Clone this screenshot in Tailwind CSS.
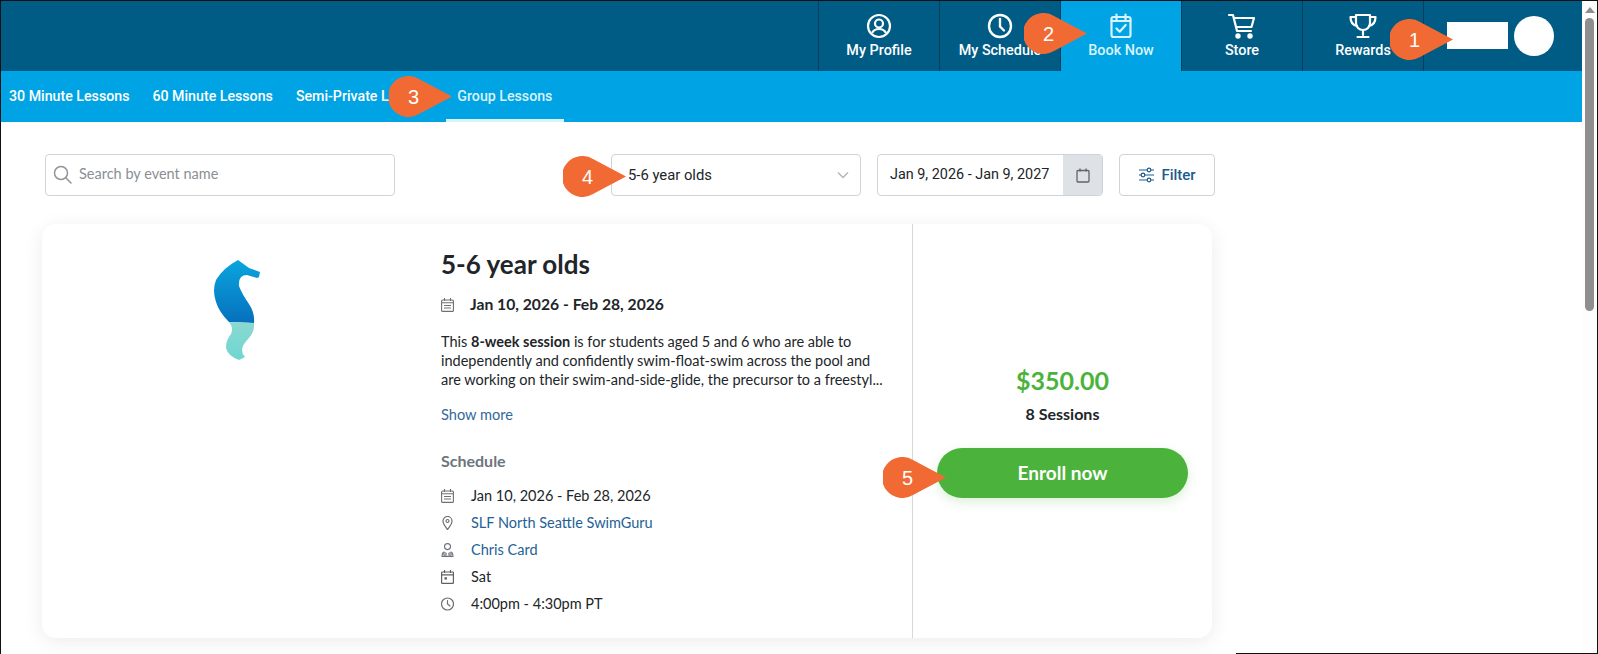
<!DOCTYPE html>
<html lang="en">
  <head>
    <meta charset="UTF-8" />
    <meta name="viewport" content="width=device-width, initial-scale=1.0" />
    <title>Book Now - Group Lessons</title>
    <script src="https://cdn.jsdelivr.net/npm/@tailwindcss/browser@4"></script>
  </head>
  <body class="relative h-[654px] w-[1598px] overflow-hidden bg-white font-['Lato',sans-serif] text-[#212529]">
    <div class="flex h-[654px] border-t border-l border-r border-t-[#111] border-l-[#111] border-r-[#111]">
      <main class="w-[1581px] shrink-0">
        <!-- top nav -->
        <nav class="flex h-[70px] justify-end bg-[#005b85] pr-[1px] font-['Roboto',sans-serif] text-[14.4px] leading-[21px] font-medium text-white">
          <a class="flex w-[121px] flex-col items-center border-l border-[#0a3d57] pt-[12px]">
            <svg class="h-[26px] w-[26px]" viewBox="0 0 26 26" fill="none" stroke="currentColor" stroke-width="2.2"><circle cx="13" cy="13" r="11"/><circle cx="13" cy="10.5" r="4"/><path d="M6 20c1.500-3 4-4 7-4s5.500 1 7 4"/></svg>
            <span class="mt-[1px]">My Profile</span>
          </a>
          <a class="flex w-[121px] flex-col items-center border-l border-[#0a3d57] pt-[12px]">
            <svg class="h-[26px] w-[26px]" viewBox="0 0 26 26" fill="none" stroke="currentColor" stroke-width="2.4" stroke-linecap="round"><circle cx="13" cy="13" r="11"/><path d="M13 6v7.500l4 4"/></svg>
            <span class="mt-[1px]">My Schedule</span>
          </a>
          <a class="flex w-[121px] flex-col items-center border-l border-[#0a3d57] bg-[#00a4e4] pt-[12px] text-[#d9f3fb]">
            <svg class="h-[26px] w-[26px]" viewBox="0 0 26 26" fill="none" stroke="currentColor" stroke-width="2.2" stroke-linecap="round" stroke-linejoin="round"><rect x="3.500" y="4" width="19" height="20" rx="2"/><path d="M8.500 1.500v5M17.500 1.500v5M3.500 8h19"/><path d="M8.500 15.500l3.200 3.200 6-6.700"/></svg>
            <span class="mt-[1px]">Book Now</span>
          </a>
          <a class="flex w-[121px] flex-col items-center border-l border-[#0a3d57] pt-[12px]">
            <svg class="h-[26px] w-[30px]" viewBox="0 0 30 26" fill="none" stroke="currentColor" stroke-width="2.2" stroke-linecap="round" stroke-linejoin="round"><path d="M2 2h4l4 16h14"/><path d="M7 5h20l-2.500 9H9.500"/><circle cx="11" cy="23" r="1.600" fill="currentColor"/><circle cx="23" cy="23" r="1.600" fill="currentColor"/></svg>
            <span class="mt-[1px]">Store</span>
          </a>
          <a class="flex w-[121px] flex-col items-center border-l border-[#0a3d57] pt-[12px]">
            <svg class="h-[26px] w-[30px]" viewBox="0 0 30 26" fill="none" stroke="currentColor" stroke-width="2.200" stroke-linecap="round" stroke-linejoin="round"><path d="M8 2h14v8c0 4-3 7-7 7s-7-3-7-7z"/><path d="M8 4H2.500c0 5 2 8 6.500 9M22 4h5.500c0 5-2 8-6.500 9M15 17v5M9.500 24h11"/></svg>
            <span class="mt-[1px]">Rewards</span>
          </a>
          <div class="flex w-[158px] items-center border-l border-[#0a3d57] pb-[1px] pl-[23px]">
            <div class="h-[27px] w-[61px] bg-white"></div>
            <div class="ml-[6px] h-[40px] w-[40px] rounded-full bg-white"></div>
          </div>
        </nav>

        <!-- lesson tabs -->
        <div class="flex h-[51px] gap-[23px] bg-[#00a4e4] pl-[8px] font-['Roboto',sans-serif] text-[14.2px] font-medium whitespace-nowrap text-white">
          <a class="flex items-center">30 Minute Lessons</a>
          <a class="flex items-center">60 Minute Lessons</a>
          <a class="flex w-[127px] items-center">Semi-Private Lessons</a>
          <a class="flex w-[118px] items-center justify-center border-b-[3px] border-[#d9f3f5] pt-[3px] text-[#d9f3fb]">Group Lessons</a>
        </div>

        <!-- filters -->
        <div class="flex items-start pt-[32px] pl-[44px]">
          <div class="flex h-[42px] w-[350px] items-center rounded border border-[#ced4da] pb-[2px] pl-[7px] text-[14.5px] text-[#8a8f94]">
            <svg class="mr-[7px] h-[19px] w-[19px]" viewBox="0 0 19 19" fill="none" stroke="#8f9599" stroke-width="1.500" stroke-linecap="round"><circle cx="8" cy="8" r="6.500"/><path d="M13 13l5 5"/></svg>
            Search by event name
          </div>
          <div class="ml-[216px] flex h-[42px] w-[250px] items-center justify-between rounded border border-[#ced4da] pr-[11px] pl-[16px] font-['Roboto',sans-serif] text-[14.8px]">
            5-6 year olds
            <svg class="h-[10px] w-[12px]" viewBox="0 0 12 10" fill="none" stroke="#b4b8bb" stroke-width="1.500"><path d="M1 2.500l5 5 5-5"/></svg>
          </div>
          <div class="ml-[16px] flex h-[42px] w-[226px] items-center overflow-hidden rounded border border-[#ced4da] font-['Roboto',sans-serif] text-[14.4px]">
            <span class="flex-1 pl-[12px]">Jan 9, 2026 - Jan 9, 2027</span>
            <span class="flex h-full w-[39px] items-center justify-center bg-[#dee2e6]">
              <svg class="h-[15px] w-[14px]" viewBox="0 0 14 15" fill="none" stroke="#5f6468" stroke-width="1.300"><rect x="1" y="2.500" width="12" height="11.500" rx="1"/><path d="M4 .5v3M10 .5v3"/></svg>
            </span>
          </div>
          <div class="ml-[16px] flex h-[42px] w-[96px] items-center justify-center gap-[6px] rounded border border-[#ced4da] font-['Roboto',sans-serif] text-[15px] font-medium text-[#1c5a8c]">
            <svg class="h-[16px] w-[17px]" viewBox="0 0 17 16" fill="none" stroke="#1c5a8c" stroke-width="1.200"><path d="M1 3h8M13 3h3M1 8h2M7 8h9M1 13h8M13 13h3"/><circle cx="11" cy="3" r="1.800"/><circle cx="5" cy="8" r="1.800"/><circle cx="11" cy="13" r="1.800"/></svg>
            Filter
          </div>
        </div>

        <!-- event card -->
        <section class="mt-[28px] ml-[41px] flex h-[414px] w-[1170px] rounded-[14px] bg-white shadow-[0_4px_20px_rgba(0,0,0,0.08)]">
          <div class="flex w-[399px] shrink-0 justify-center pt-[34px] pr-[7px]">
            <svg class="h-[104px] w-[50px]" viewBox="0 0 50 104">
              <defs>
                <linearGradient id="seaTop" x1="0" y1="0" x2="0" y2="1"><stop offset="0" stop-color="#0aa5de"/><stop offset="1" stop-color="#0670bd"/></linearGradient>
                <linearGradient id="seaTail" x1="0" y1="0" x2="0" y2="1"><stop offset="0" stop-color="#8ad9d2"/><stop offset="1" stop-color="#6fd6d0"/></linearGradient>
              </defs>
              <path d="M25 2L36 10L47 14L46 19L44 20L34 17Q25 17 26 28Q29 36 36 46Q42 55 41 65L16 64Q6 54 3 44Q-1 32 3 22Q10 10 25 2Z" fill="url(#seaTop)"/>
              <path d="M16 64L41 65Q42 73 36 80Q29 87 29 92Q29 96 32 99L26 102Q15 98 13 90Q13 82 18 76Q21 70 16 64Z" fill="url(#seaTail)"/>
            </svg>
          </div>
          <div class="w-[471px] shrink-0 pt-[22px]">
            <h2 class="text-[26px] leading-[36px] font-bold text-[#212529]">5-6 year olds</h2>
            <div class="mt-[11px] flex h-[24px] items-center text-[15.7px] font-bold">
              <svg class="mr-[16px] h-[14px] w-[13px]" viewBox="0 0 13 14" fill="none" stroke="#6c7176" stroke-width="1.100"><rect x=".6" y="2" width="11.800" height="11.400" rx="1"/><path d="M3.500 0v3M9.500 0v3M.6 4.800h11.800M3 7.500h7M3 10h7" /></svg>
              Jan 10, 2026 - Feb 28, 2026
            </div>
            <p class="mt-[15px] h-[57px] w-[446px] overflow-hidden text-[14.5px] leading-[19px]">
              This <b>8-week session</b> is for students aged 5 and 6 who are able to independently and confidently swim-float-swim across the pool and are working on their swim-and-side-glide, the precursor to a freestyl...
            </p>
            <a class="mt-[15px] block text-[14.6px] leading-[21px] text-[#33699b]">Show more</a>
            <h3 class="mt-[25px] text-[16px] leading-[21px] font-bold text-[#6c757d]">Schedule</h3>
            <ul class="mt-[14px] flex flex-col gap-[6px] text-[14.5px] leading-[21px]">
              <li class="flex items-center">
                <svg class="mr-[17px] h-[14px] w-[13px]" viewBox="0 0 13 14" fill="none" stroke="#6c7176" stroke-width="1.100"><rect x=".6" y="2" width="11.800" height="11.400" rx="1"/><path d="M3.500 0v3M9.500 0v3M.6 4.800h11.800M3 7.500h7M3 10h7" /></svg>
                Jan 10, 2026 - Feb 28, 2026
              </li>
              <li class="flex items-center text-[#245f97]">
                <svg class="mr-[17px] h-[14px] w-[13px]" viewBox="0 0 13 14" fill="none" stroke="#6c7176" stroke-width="1.200"><path d="M6.500 13.500C3.500 9.800 2 7.500 2 5a4.500 4.500 0 0 1 9 0c0 2.500-1.500 4.800-4.500 8.500z"/><circle cx="6.500" cy="5" r="1.500"/></svg>
                SLF North Seattle SwimGuru
              </li>
              <li class="flex items-center text-[#245f97]">
                <svg class="mr-[17px] h-[14px] w-[13px]" viewBox="0 0 13 14" fill="none" stroke="#6c7176" stroke-width="1.100"><circle cx="6.500" cy="3.600" r="3"/><path d="M1 13.400c0-3 .8-4.400 2.600-4.400M12 13.400c0-3-.8-4.400-2.600-4.400M.6 13.400h11.800"/><circle cx="4" cy="11" r="1.300"/><circle cx="9" cy="11" r="1.300"/></svg>
                Chris Card
              </li>
              <li class="flex items-center">
                <svg class="mr-[17px] h-[14px] w-[13px]" viewBox="0 0 13 14" fill="none" stroke="#5d6266" stroke-width="1.200"><rect x=".6" y="2" width="11.800" height="11.400" rx=".6"/><path d="M3.500 0v3M9.500 0v3M.6 4.800h11.800"/><rect x="3.500" y="7.200" width="2.400" height="2.400" fill="#5d6266" stroke="none"/></svg>
                Sat
              </li>
              <li class="flex items-center">
                <svg class="mr-[17px] h-[14px] w-[13px]" viewBox="0 0 13 14" fill="none" stroke="#6c7176" stroke-width="1.200" stroke-linecap="round"><circle cx="6.500" cy="7" r="6"/><path d="M6.500 3.500V7l2.500 2"/></svg>
                4:00pm - 4:30pm PT
              </li>
            </ul>
          </div>
          <div class="flex flex-1 flex-col items-center border-l border-[#d8d8d8] pt-[137px]">
            <div class="text-[25px] leading-[39px] font-bold text-[#4bb33b]">$350.00</div>
            <div class="mt-[3px] text-[16px] leading-[21px] font-bold">8 Sessions</div>
            <button class="mt-[24px] h-[50px] w-[251px] rounded-full bg-[#4bb33b] text-[19px] font-bold text-white shadow-[0_4px_12px_rgba(75,179,59,0.2)]">Enroll now</button>
          </div>
        </section>
      </main>

      <!-- page scrollbar -->
      <aside class="flex w-[15px] flex-col items-center bg-[#fdfdfd] pt-[6px]">
        <div class="h-0 w-0 border-x-[5px] border-b-[6px] border-x-transparent border-b-[#8e8e8e]"></div>
        <div class="mt-[5px] h-[293px] w-[9px] rounded-full bg-[#8e8e8e]"></div>
      </aside>
    </div>
    <div class="absolute right-0 bottom-0 h-px w-[362px] bg-[#111]"></div>

    <!-- numbered callouts -->
    <div class="absolute top-[19px] left-[1390px] h-[41px] w-[63px]">
      <svg class="absolute inset-0 h-full w-full" viewBox="0 0 63 41"><path d="M63 20.500L30 2.900A20.500 20.500 0 1 0 30 38.100Z" fill="#f26a33"/></svg>
      <span class="absolute top-0 left-[4px] flex h-[41px] w-[41px] items-center justify-center font-['Liberation_Sans',sans-serif] text-[20px] text-white">1</span>
    </div>
    <div class="absolute top-[13px] left-[1024px] h-[41px] w-[63px]">
      <svg class="absolute inset-0 h-full w-full" viewBox="0 0 63 41"><path d="M63 20.500L30 2.900A20.500 20.500 0 1 0 30 38.100Z" fill="#f26a33"/></svg>
      <span class="absolute top-0 left-[4px] flex h-[41px] w-[41px] items-center justify-center font-['Liberation_Sans',sans-serif] text-[20px] text-white">2</span>
    </div>
    <div class="absolute top-[76px] left-[389px] h-[41px] w-[63px]">
      <svg class="absolute inset-0 h-full w-full" viewBox="0 0 63 41"><path d="M63 20.500L30 2.900A20.500 20.500 0 1 0 30 38.100Z" fill="#f26a33"/></svg>
      <span class="absolute top-0 left-[4px] flex h-[41px] w-[41px] items-center justify-center font-['Liberation_Sans',sans-serif] text-[20px] text-white">3</span>
    </div>
    <div class="absolute top-[156px] left-[563px] h-[41px] w-[63px]">
      <svg class="absolute inset-0 h-full w-full" viewBox="0 0 63 41"><path d="M63 20.500L30 2.900A20.500 20.500 0 1 0 30 38.100Z" fill="#f26a33"/></svg>
      <span class="absolute top-0 left-[4px] flex h-[41px] w-[41px] items-center justify-center font-['Liberation_Sans',sans-serif] text-[20px] text-white">4</span>
    </div>
    <div class="absolute top-[457px] left-[883px] h-[41px] w-[63px]">
      <svg class="absolute inset-0 h-full w-full" viewBox="0 0 63 41"><path d="M63 20.500L30 2.900A20.500 20.500 0 1 0 30 38.100Z" fill="#f26a33"/></svg>
      <span class="absolute top-0 left-[4px] flex h-[41px] w-[41px] items-center justify-center font-['Liberation_Sans',sans-serif] text-[20px] text-white">5</span>
    </div>
  </body>
</html>
